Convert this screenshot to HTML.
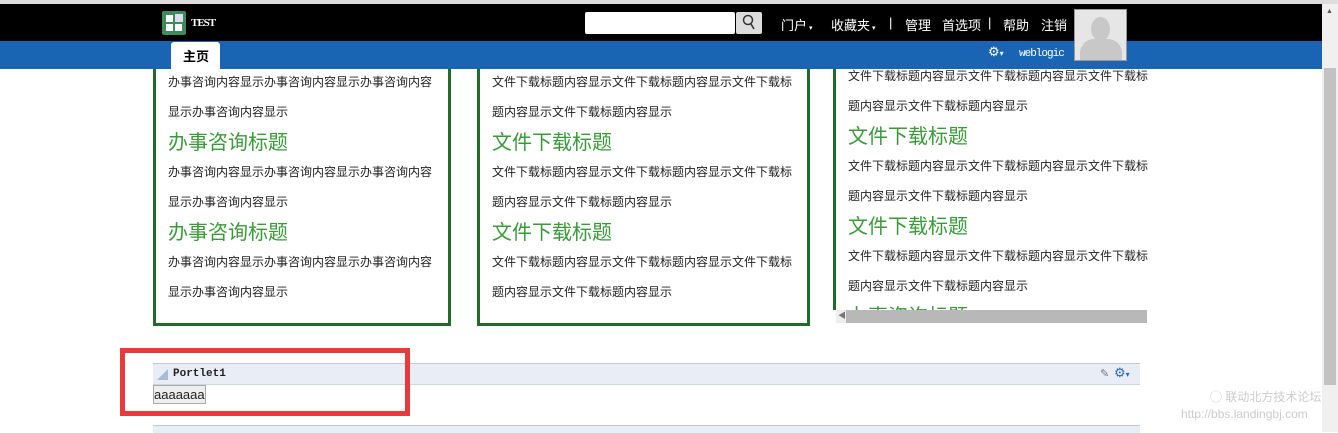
<!DOCTYPE html><html><head><meta charset="utf-8"><style>
body{margin:0;width:1338px;height:432px;overflow:hidden;background:#fff;font-family:"Liberation Sans","Noto Sans CJK SC",sans-serif;position:relative}
.a{position:absolute}
.t{font-size:12px;color:#222;white-space:nowrap;position:absolute}
.h{font-size:20px;color:#3a9a3a;white-space:nowrap;position:absolute}
.col{position:absolute;border:3px solid #1e6b2a;border-top:none;background:#fff;overflow:hidden}
.n{position:absolute;top:15px;color:#fff;font-size:13px;white-space:nowrap}
</style></head><body>
<div class="a" style="left:0;top:0;width:1338px;height:4px;background:#ddd"></div>
<div class="a" style="left:0;top:4px;width:1322px;height:37px;background:#000"></div>
<div class="a" style="left:0;top:41px;width:1322px;height:28px;background:#1a64b4"></div>
<div class="a" style="left:162px;top:11px;width:24px;height:24px;background:#3d8a5a;border-radius:2px"></div>
<div class="a" style="left:166px;top:15px;width:7px;height:7px;background:#fff"></div>
<div class="a" style="left:175px;top:14px;width:8px;height:8px;background:#dde"></div>
<div class="a" style="left:166px;top:24px;width:7px;height:7px;background:#fff"></div>
<div class="a" style="left:175px;top:24px;width:7px;height:7px;background:#fff"></div>
<div class="a" style="left:191px;top:17px;color:#fff;font:bold 11px 'Liberation Serif',serif;letter-spacing:-1px">TEST</div>
<div class="a" style="left:171px;top:42px;width:49px;height:27px;background:#fff;border-radius:3px 3px 0 0"></div>
<div class="a" style="left:183px;top:46px;font-size:13px;font-weight:bold;color:#000">主页</div>
<div class="a" style="left:585px;top:12px;width:150px;height:22px;background:#fff;border-radius:2px"></div>
<div class="a" style="left:736px;top:12px;width:26px;height:22px;background:#ddd;border-radius:2px"></div>
<svg class="a" style="left:742px;top:14px" width="14" height="16"><circle cx="6" cy="6" r="4.5" fill="none" stroke="#333" stroke-width="1.5"/><line x1="9" y1="10" x2="12" y2="15" stroke="#333" stroke-width="1.6"/></svg>
<div class="n" style="left:781px">门户<span style="font-size:7px"> ▾</span></div>
<div class="n" style="left:831px">收藏夹<span style="font-size:7px"> ▾</span></div>
<div class="n" style="left:889px">|</div>
<div class="n" style="left:905px">管理</div>
<div class="n" style="left:942px">首选项</div>
<div class="n" style="left:988px">|</div>
<div class="n" style="left:1003px">帮助</div>
<div class="n" style="left:1041px">注销</div>
<div class="a" style="left:1074px;top:9px;width:51px;height:50px;background:#e6e6e6;border:1px solid #999;overflow:hidden">
<div class="a" style="left:16px;top:7px;width:19px;height:24px;background:#c8c8c8;border-radius:50%"></div>
<div class="a" style="left:5px;top:29px;width:42px;height:30px;background:#c8c8c8;border-radius:14px 14px 0 0"></div></div>
<div class="a" style="left:988px;top:44px;color:#fff;font-size:13px">⚙<span style="font-size:8px">▾</span></div>
<div class="a" style="left:1019px;top:48px;color:#fff;font:11px 'Liberation Mono',monospace;letter-spacing:-1px">weblogic</div>
<div class="a" style="left:1322px;top:4px;width:16px;height:428px;background:#f0f0f0"></div>
<div class="a" style="left:1324px;top:68px;width:12px;height:317px;background:#c2c2c2"></div>
<div class="a" style="left:1326px;top:8px;font-size:7px;color:#555">▲</div>

<div class="col" style="left:153px;top:69px;width:292px;height:254px">
<div class="t" style="left:12px;top:4px">办事咨询内容显示办事咨询内容显示办事咨询内容</div>
<div class="t" style="left:12px;top:34px">显示办事咨询内容显示</div>
<div class="h" style="left:12px;top:57px">办事咨询标题</div>
<div class="t" style="left:12px;top:94px">办事咨询内容显示办事咨询内容显示办事咨询内容</div>
<div class="t" style="left:12px;top:124px">显示办事咨询内容显示</div>
<div class="h" style="left:12px;top:147px">办事咨询标题</div>
<div class="t" style="left:12px;top:184px">办事咨询内容显示办事咨询内容显示办事咨询内容</div>
<div class="t" style="left:12px;top:214px">显示办事咨询内容显示</div>
</div>
<div class="col" style="left:477px;top:69px;width:327px;height:254px">
<div class="t" style="left:12px;top:4px">文件下载标题内容显示文件下载标题内容显示文件下载标</div>
<div class="t" style="left:12px;top:34px">题内容显示文件下载标题内容显示</div>
<div class="h" style="left:12px;top:57px">文件下载标题</div>
<div class="t" style="left:12px;top:94px">文件下载标题内容显示文件下载标题内容显示文件下载标</div>
<div class="t" style="left:12px;top:124px">题内容显示文件下载标题内容显示</div>
<div class="h" style="left:12px;top:147px">文件下载标题</div>
<div class="t" style="left:12px;top:184px">文件下载标题内容显示文件下载标题内容显示文件下载标</div>
<div class="t" style="left:12px;top:214px">题内容显示文件下载标题内容显示</div>
</div>
<div class="a" style="left:833px;top:69px;width:314px;height:241px;border-left:3px solid #1e6b2a;overflow:hidden">
<div class="t" style="left:12px;top:-2px">文件下载标题内容显示文件下载标题内容显示文件下载标</div>
<div class="t" style="left:12px;top:28px">题内容显示文件下载标题内容显示</div>
<div class="h" style="left:12px;top:51px">文件下载标题</div>
<div class="t" style="left:12px;top:88px">文件下载标题内容显示文件下载标题内容显示文件下载标</div>
<div class="t" style="left:12px;top:118px">题内容显示文件下载标题内容显示</div>
<div class="h" style="left:12px;top:141px">文件下载标题</div>
<div class="t" style="left:12px;top:178px">文件下载标题内容显示文件下载标题内容显示文件下载标</div>
<div class="t" style="left:12px;top:208px">题内容显示文件下载标题内容显示</div>
<div class="h" style="left:12px;top:231px">办事咨询标题</div>
</div>
<div class="a" style="left:836px;top:310px;width:311px;height:13px;background:#eee"></div>
<div class="a" style="left:846px;top:310px;width:301px;height:13px;background:#b8b8b8"></div>
<div class="a" style="left:838px;top:310px;font-size:8px;color:#777">◀</div>

<div class="a" style="left:153px;top:363px;width:987px;height:20px;background:#e9eef6;border-top:1px solid #c0c8d4;border-bottom:1px solid #d0d6de"></div>
<svg class="a" style="left:157px;top:369px" width="12" height="12"><path d="M0 11L11 0V11Z" fill="#a8bcd4"/></svg>
<div class="a" style="left:173px;top:368px;font:bold 11px 'Liberation Mono',monospace;color:#222">Portlet1</div>
<div class="a" style="left:1100px;top:367px;font-size:11px;color:#777">✎</div>
<div class="a" style="left:1114px;top:365px;font-size:13px;color:#2a6ab0">⚙<span style="font-size:8px">▾</span></div>
<div class="a" style="left:153px;top:385px;width:51px;height:17px;background:#eee;border:1px solid #aaa;font-size:13px;line-height:17px;color:#222">aaaaaaa</div>
<div class="a" style="left:153px;top:425px;width:987px;height:7px;background:#e9eef6;border-top:1px solid #c0c8d4"></div>
<div class="a" style="left:120px;top:348px;width:280px;height:58px;border:5px solid #e83a3a"></div>
<div class="a" style="left:1210px;top:388px;font-size:12px;color:#ccc">◯ 联动北方技术论坛</div>
<div class="a" style="left:1181px;top:407px;font-size:12px;color:#ccc">http://bbs.landingbj.com</div>
</body></html>
